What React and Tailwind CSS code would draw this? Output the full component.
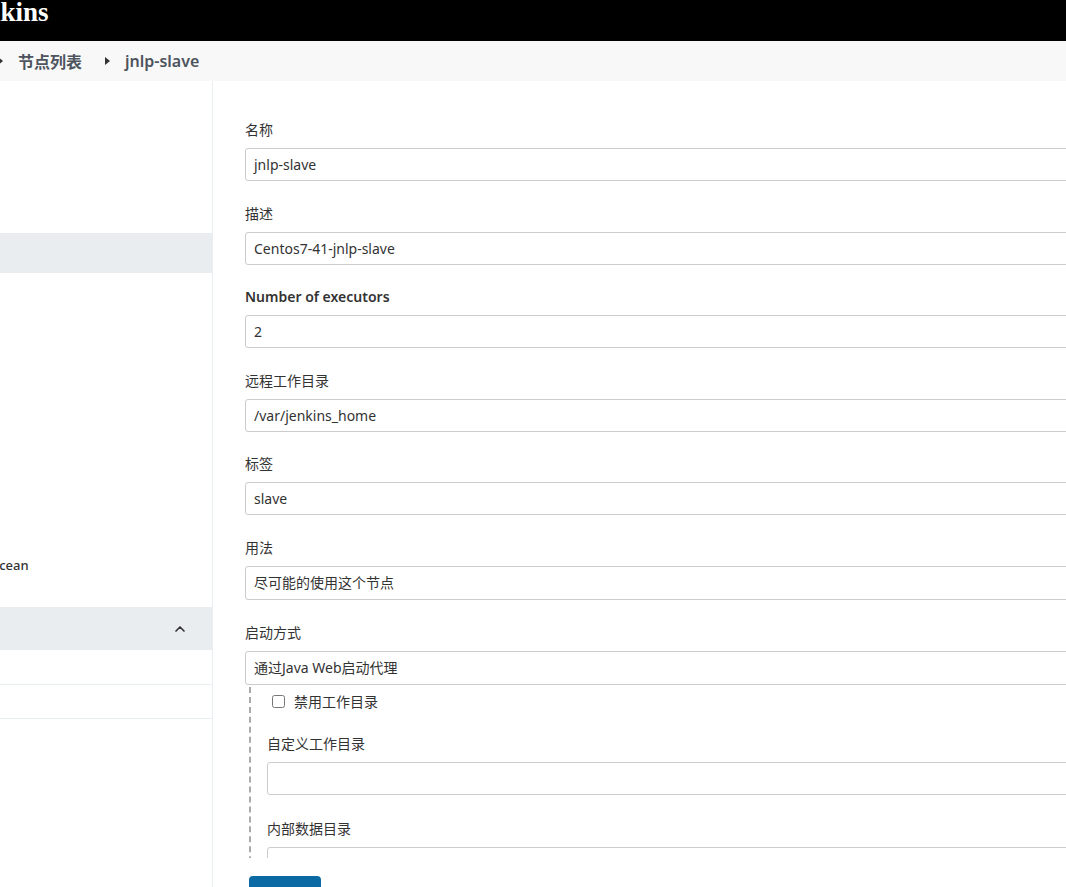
import { ChevronUp } from 'lucide-react'

const FIELDS = [
  { label: '名称', value: 'jnlp-slave' },
  { label: '描述', value: 'Centos7-41-jnlp-slave' },
  { label: 'Number of executors', value: '2', bold: true },
  { label: '远程工作目录', value: '/var/jenkins_home' },
  { label: '标签', value: 'slave' },
  { label: '用法', value: '尽可能的使用这个节点', tall: true },
  { label: '启动方式', value: '通过Java Web启动代理', tall: true, last: true },
]

function Field({ label, value, bold, tall, last }) {
  return (
    <div className={last ? '' : 'mb-[22.5px]'}>
      <div className={`h-5 leading-5 mb-2 text-[14px] text-[#333] ${bold ? 'font-semibold' : ''}`}>{label}</div>
      <div className={`w-[840px] ${tall ? 'h-[34.5px]' : 'h-[33px]'} border border-[#ccc] rounded-[3px] bg-white px-2 flex items-center text-[14px] text-[#333]`}>
        {value}
      </div>
    </div>
  )
}

function Caret() {
  return (
    <svg width="5" height="8" viewBox="0 0 5 8" className="fill-[#333]">
      <path d="M0 0 L5 4 L0 8 Z" />
    </svg>
  )
}

export default function App() {
  return (
    <div className="w-[1066px] h-[887px] overflow-hidden bg-white flex flex-col" style={{ fontFamily: '"Noto Sans", "Noto Sans CJK SC", sans-serif' }}>
      {/* Header */}
      <header className="h-[41px] bg-black flex items-center shrink-0 overflow-hidden">
        <span className="ml-[-40px] -mt-4 text-white font-bold text-[27px] leading-none" style={{ fontFamily: '"Liberation Serif", serif' }}>
          Jenkins
        </span>
      </header>

      {/* Breadcrumb */}
      <nav className="h-[40px] bg-[#f8f8f8] flex items-center shrink-0 text-[16px] font-semibold text-[#4d545d]">
        <span className="ml-[-2px]"><Caret /></span>
        <span className="ml-[15px]" style={{ fontFamily: '"Noto Sans CJK SC", sans-serif' }}>节点列表</span>
        <span className="ml-[23px]"><Caret /></span>
        <span className="ml-[15px]">jnlp-slave</span>
      </nav>

      <div className="flex flex-1 min-h-0">
        {/* Sidebar */}
        <aside className="w-[213px] shrink-0 border-r border-[#e9eef1] flex flex-col">
          <div className="h-[152px]" />
          <div className="h-[40px] bg-[#e9edf0]" />
          <div className="h-[272px]" />
          <div className="h-[42px] flex items-center text-[13px] font-medium text-[#333] ml-[-42px]">Blue Ocean</div>
          <div className="h-[20px]" />
          <div className="h-[43px] bg-[#e9edf0] flex items-center justify-end pr-[24px]">
            <ChevronUp size={16} strokeWidth={2.5} className="text-[#333]" />
          </div>
          <div className="h-[35px] border-b border-[#e9eef1]" />
          <div className="h-[34px] border-b border-[#e9eef1]" />
        </aside>

        {/* Main */}
        <main className="flex-1 flex flex-col min-w-0">
          <div className="h-[777px] overflow-hidden pl-[32px] pt-[39px] shrink-0">
            {FIELDS.map((f) => (
              <Field key={f.label} {...f} />
            ))}
            <div className="ml-1 mt-[2px] border-l-2 border-dashed border-[#aaa] pl-[16px] pt-[4px] pb-8">
              <label className="h-5 flex items-center gap-[9px] text-[14px] text-[#333] ml-[5px]">
                <input type="checkbox" className="w-[13px] h-[13px] m-0" />
                禁用工作目录
              </label>
              <div className="mt-[23px]">
                <div className="h-5 leading-5 mb-2 text-[14px] text-[#333]">自定义工作目录</div>
                <div className="w-[820px] h-[33px] border border-[#ccc] rounded-[3px] bg-white" />
              </div>
              <div className="mt-[24px]">
                <div className="h-5 leading-5 mb-2 text-[14px] text-[#333]">内部数据目录</div>
                <div className="w-[820px] h-[33px] border border-[#ccc] rounded-[3px] bg-white px-2 flex items-center text-[14px] text-[#333]">remoting</div>
              </div>
            </div>
          </div>
          <div className="pl-[36px] pt-[18px]">
            <button className="w-[72px] h-[38px] bg-[#0b69a3] rounded-[4px] text-white text-[14px]">保存</button>
          </div>
        </main>
      </div>
    </div>
  )
}
